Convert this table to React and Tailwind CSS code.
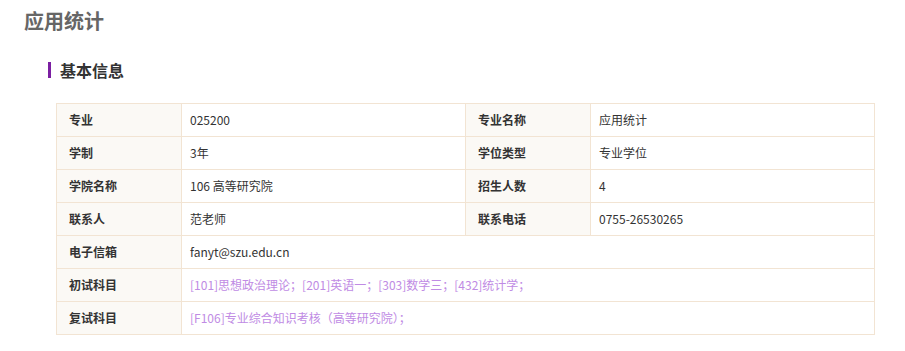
const rows = [
  [["专业", "025200"], ["专业名称", "应用统计"]],
  [["学制", "3年"], ["学位类型", "专业学位"]],
  [["学院名称", "106 高等研究院"], ["招生人数", "4"]],
  [["联系人", "范老师"], ["联系电话", "0755-26530265"]],
];

const wide = [
  ["电子信箱", "fanyt@szu.edu.cn", false],
  ["初试科目", "[101]思想政治理论；[201]英语一；[303]数学三；[432]统计学；", true],
  ["复试科目", "[F106]专业综合知识考核（高等研究院）；", true],
];

const th = "border border-[#f2e4d3] bg-[#fbf9f5] h-[33px] pl-3 pr-2 text-left font-bold text-[#333]";
const td = "border border-[#f2e4d3] h-[33px] pl-2 pr-2 text-[#333]";

export default function App() {
  return (
    <div
      className="bg-white w-[905px] h-[351px] overflow-hidden"
      style={{ fontFamily: '"Noto Sans CJK SC", "Noto Sans", sans-serif' }}
    >
      <h1 className="pl-6 pt-[7px] text-[20px] leading-[28px] font-bold text-[#666]">应用统计</h1>
      {/* section heading */}
      <div className="flex items-center mt-[24px] ml-12">
        <span className="w-[3px] h-4 bg-[#7b1fa2]" />
        <h2 className="ml-[9px] text-[16px] leading-[22px] font-bold text-[#333]">基本信息</h2>
      </div>
      <table className="ml-14 mt-[22px] border-collapse text-[12px] w-[818px] table-fixed">
        <colgroup>
          <col className="w-[125px]" />
          <col className="w-[284px]" />
          <col className="w-[125px]" />
          <col className="w-[284px]" />
        </colgroup>
        <tbody>
          {rows.map((r) => (
            <tr key={r[0][0]}>
              <th className={th}>{r[0][0]}</th>
              <td className={td}>{r[0][1]}</td>
              <th className={th}>{r[1][0]}</th>
              <td className={td}>{r[1][1]}</td>
            </tr>
          ))}
          {wide.map(([k, v, link]) => (
            <tr key={k}>
              <th className={th}>{k}</th>
              <td colSpan={3} className={td + (link ? " !text-[#c08be4]" : "")}>{v}</td>
            </tr>
          ))}
        </tbody>
      </table>
    </div>
  );
}
